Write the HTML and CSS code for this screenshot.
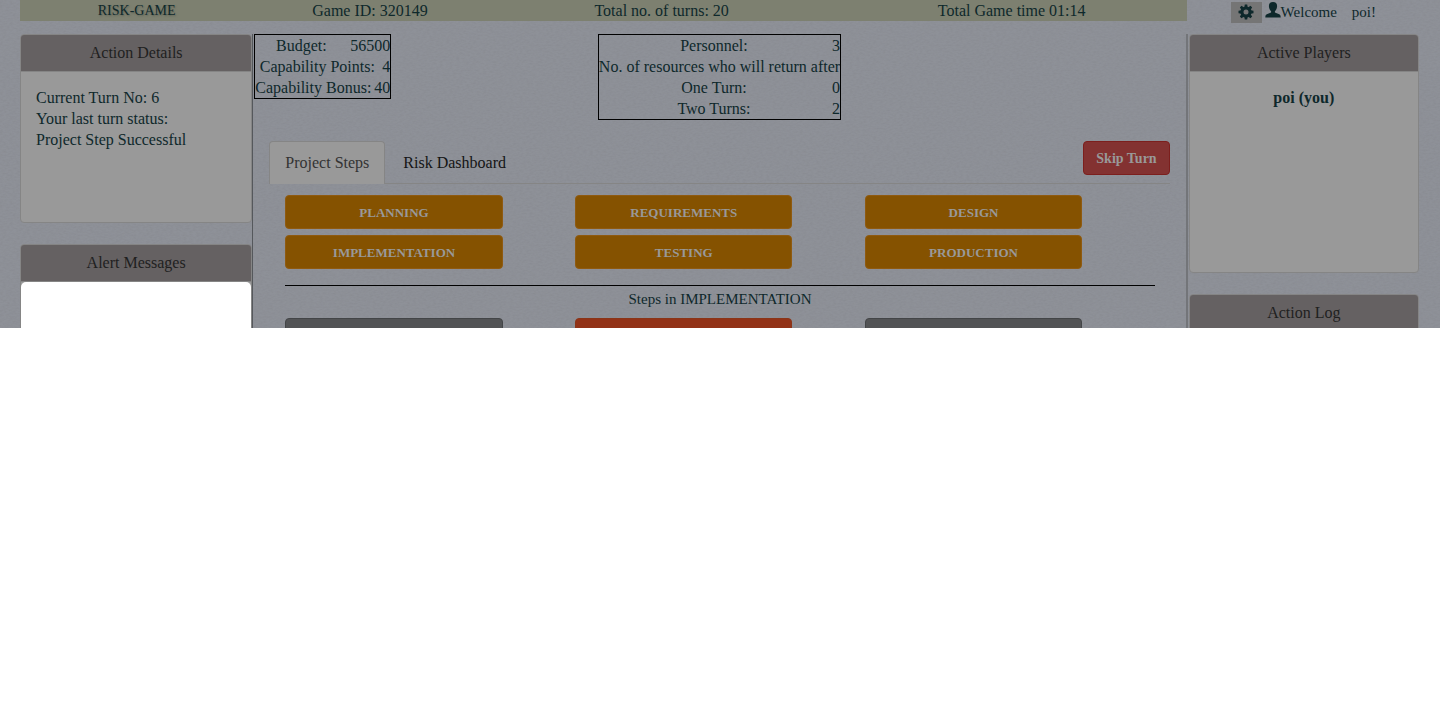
FILE: index.html
```html
<!DOCTYPE html>
<html lang="en">
<head>
<meta charset="utf-8">
<title>RISK-GAME</title>
<link rel="stylesheet" href="styles.css">
</head>
<body>
<div class="game">
  <header class="topbar">
    <h1 class="cell cell-2 brand">RISK-GAME</h1>
    <div class="cell cell-2">Game ID: 320149</div>
    <div class="cell cell-3">Total no. of turns: 20</div>
    <div class="cell cell-3">Total Game time 01:14</div>
    <div class="user cell-2">
      <button class="gear" type="button" aria-label="Settings">
        <svg width="16" height="16" viewBox="0 0 16 16" aria-hidden="true"><g fill="currentColor"><path fill-rule="evenodd" d="M8 2.400a5.600 5.600 0 1 0 0 11.200A5.600 5.600 0 0 0 8 2.400zM8 5.500a2.500 2.500 0 1 1 0 5 2.500 2.500 0 0 1 0-5z"/><path id="t" d="M6.300 3.500 6.800.5h2.400l.5 3z"/><use href="#t" transform="rotate(45 8 8)"/><use href="#t" transform="rotate(90 8 8)"/><use href="#t" transform="rotate(135 8 8)"/><use href="#t" transform="rotate(180 8 8)"/><use href="#t" transform="rotate(225 8 8)"/><use href="#t" transform="rotate(270 8 8)"/><use href="#t" transform="rotate(315 8 8)"/></g></svg>
      </button>
      <svg class="person" width="16" height="16" viewBox="0 0 16 16" aria-hidden="true"><path fill="currentColor" d="M8 0C5.400 0 3.900 1.600 3.900 4c0 2.200.9 4.200 2.200 5.300v1.300L1.800 12.300C.7 12.900.4 13.500.3 15.500h15.400c-.1-2-.4-2.600-1.500-3.200L9.900 10.600V9.300C11.200 8.200 12.100 6.200 12.100 4 12.100 1.600 10.600 0 8 0z"/></svg>
      <span>Welcome</span><span class="name">poi!</span>
    </div>
  </header>

  <div class="columns">
    <aside class="side">
      <section class="panel">
        <h2 class="panel-title">Action Details</h2>
        <div class="panel-body details">
          <p>Current Turn No: 6</p>
          <p>Your last turn status:</p>
          <p>Project Step Successful</p>
        </div>
      </section>
      <section class="panel">
        <h2 class="panel-title">Alert Messages</h2>
        <div class="panel-body highlighted"></div>
      </section>
    </aside>

    <main class="board">
      <div class="stats">
        <dl class="stat">
          <div class="row"><dt>Budget:</dt><dd>56500</dd></div>
          <div class="row"><dt>Capability Points:</dt><dd>4</dd></div>
          <div class="row"><dt>Capability Bonus:</dt><dd>40</dd></div>
        </dl>
        <dl class="stat personnel">
          <div class="row"><dt>Personnel:</dt><dd>3</dd></div>
          <div class="row"><dt>No. of resources who will return after</dt></div>
          <div class="row"><dt>One Turn:</dt><dd>0</dd></div>
          <div class="row"><dt>Two Turns:</dt><dd>2</dd></div>
        </dl>
      </div>
      <div class="work">
        <nav class="tabs">
          <a class="tab active" href="#steps">Project Steps</a>
          <a class="tab" href="#risks">Risk Dashboard</a>
          <button class="btn skip" type="button">Skip Turn</button>
        </nav>
        <div class="steps" id="steps">
          <div class="grid">
            <button class="btn" type="button">PLANNING</button>
            <button class="btn" type="button">REQUIREMENTS</button>
            <button class="btn" type="button">DESIGN</button>
            <button class="btn" type="button">IMPLEMENTATION</button>
            <button class="btn" type="button">TESTING</button>
            <button class="btn" type="button">PRODUCTION</button>
          </div>
          <h3 class="steps-title">Steps in IMPLEMENTATION</h3>
          <div class="grid">
            <button class="btn done" type="button" aria-label="Step 1"></button>
            <button class="btn current" type="button" aria-label="Step 2"></button>
            <button class="btn done" type="button" aria-label="Step 3"></button>
          </div>
        </div>
      </div>
    </main>

    <aside class="side side-right">
      <section class="panel">
        <h2 class="panel-title">Active Players</h2>
        <div class="panel-body players"><strong>poi (you)</strong></div>
      </section>
      <section class="panel">
        <h2 class="panel-title">Action Log</h2>
        <div class="panel-body"></div>
      </section>
    </aside>
  </div>
</div>
</body>
</html>
```

FILE: styles.css
```css
* { box-sizing: border-box; }

body {
  margin: 0;
  background: #fff;
  color: #0e282b;
  font: 16px/21px "Liberation Serif", serif;
}

h1, h2, h3, p, dl, dd { margin: 0; font-weight: normal; }

button { font: inherit; }

/* Only the upper part of the board is visible; the noise gives a linen weave */
.game {
  height: 328px;
  padding: 0 20px;
  overflow: hidden;
  background-color: #8e9198;
  background-image: url("data:image/svg+xml,%3Csvg xmlns='http://www.w3.org/2000/svg' width='200' height='200'%3E%3Cfilter id='n' x='0' y='0' width='100%25' height='100%25'%3E%3CfeTurbulence type='fractalNoise' baseFrequency='0.3 0.6' numOctaves='2' stitchTiles='stitch'/%3E%3CfeColorMatrix values='0 0 0 0 0.2 0 0 0 0 0.2 0 0 0 0 0.22 0.45 0 0 0 -0.15'/%3E%3C/filter%3E%3Crect width='200' height='200' filter='url(%23n)'/%3E%3C/svg%3E");
}

.topbar {
  display: grid;
  grid-template-columns: repeat(12, 1fr);
}

.cell {
  height: 21px;
  background: #7d8070;
  text-align: center;
}

.cell-2 { grid-column: span 2; }
.cell-3 { grid-column: span 3; }

.brand {
  font-size: 14px;
  line-height: 21px;
  text-shadow: 1px 1px 2px #5c6054;
}

.user {
  display: flex;
  justify-content: center;
  align-items: flex-start;
  height: 21px;
  padding-top: 2px;
  font-size: 15px;
}

.gear {
  display: flex;
  justify-content: center;
  width: 31px;
  height: 21px;
  margin-right: 3px;
  padding: 2px;
  border: 0;
  background: #757575;
  color: inherit;
}

.name { margin-left: 15px; }

.columns {
  display: grid;
  grid-template-columns: 2fr 8fr 2fr;
  padding-top: 13px;
}

.side {
  display: flex;
  flex-direction: column;
  gap: 21px;
  padding-right: 1px;
}

.side-right { padding-left: 2px; }

.panel {
  border: 1px solid #858585;
  border-radius: 4px;
  background: #999;
}

.panel-title {
  padding: 8px 15px;
  border-bottom: 1px solid #858585;
  border-radius: 3px 3px 0 0;
  background: #656162;
  color: #1f1f1f;
  font-size: 16px;
  line-height: 20px;
  text-align: center;
}

.panel-body {
  min-height: 150px;
  padding: 15px;
}

.highlighted {
  border-radius: 5px;
  background: #fff;
}

.players {
  min-height: 200px;
  text-align: center;
}

.board {
  min-height: 294px;
  margin: 0 -1px;
  border-right: 2px solid #737579;
  border-left: 1px solid #55585c;
}

.stats {
  display: grid;
  grid-template-columns: 1fr 1fr 1fr;
  align-items: start;
  padding: 0 1px;
}

.stat {
  justify-self: start;
  border: 1px solid #000;
}

.personnel { justify-self: center; }

.row {
  display: flex;
}

.row dt {
  flex: 1;
  text-align: center;
  white-space: nowrap;
}

.row dd { padding-left: 3px; }

.work { padding: 21px 16px 0; }

.tabs {
  display: flex;
  align-items: flex-start;
  height: 43px;
  border-bottom: 1px solid #858585;
}

.tab {
  height: 43px;
  margin-right: 2px;
  padding: 11px 15px 10px;
  border: 1px solid transparent;
  border-bottom: 0;
  border-radius: 4px 4px 0 0;
  color: #141414;
  line-height: 20px;
  text-decoration: none;
}

.tab.active {
  border-color: #858585;
  background: #999;
  color: #333;
}

.btn {
  height: 34px;
  padding: 0 12px;
  border: 1px solid #8f5a10;
  border-radius: 4px;
  background: #855200;
  color: #999;
  font-size: 13px;
  font-weight: bold;
}

.skip {
  margin-left: auto;
  border-color: #7c1f1d;
  background: #833231;
  font-size: 14px;
}

.steps { padding: 11px 15px 0 16px; }

.grid {
  display: grid;
  grid-template-columns: 1fr 1fr 1fr;
  gap: 6px 0;
}

.grid .btn { width: 75%; }

.steps-title {
  margin: 16px 0 8px;
  padding-top: 3px;
  border-top: 1px solid #000;
  font-size: 15px;
  line-height: 21px;
  text-align: center;
}

.grid .done {
  border-color: #434547;
  background: #525355;
}

.grid .current {
  border-color: #8a3518;
  background: #923217;
}
```
